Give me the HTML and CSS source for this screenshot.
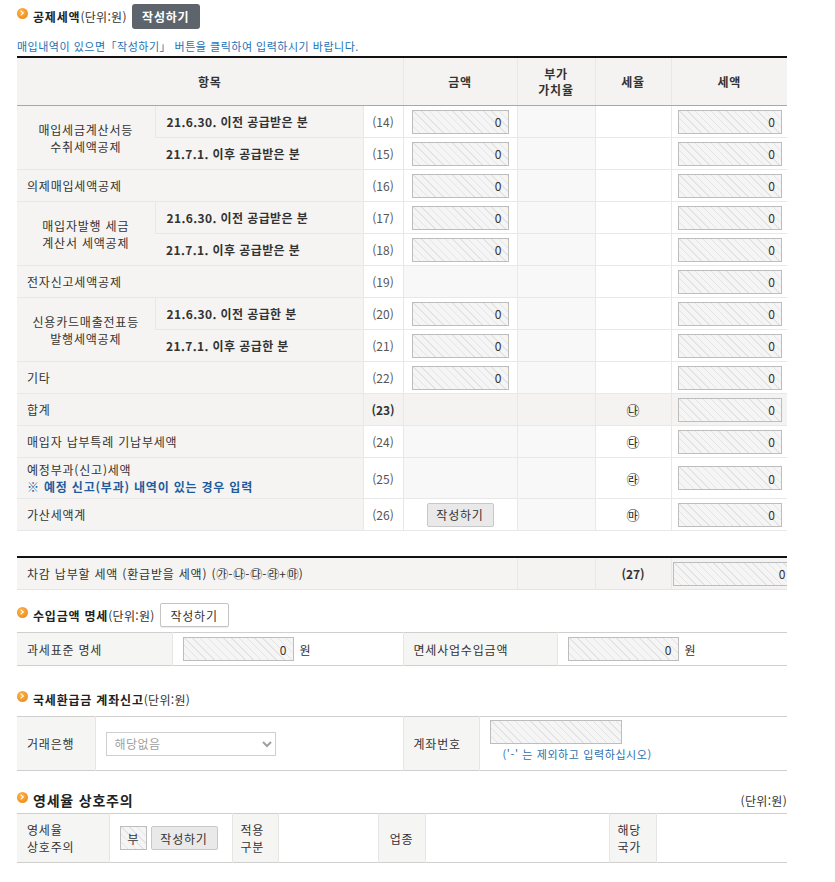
FILE: index.html
```html
<!DOCTYPE html>
<html lang="ko">
<head>
<meta charset="utf-8">
<title>공제세액</title>
<link rel="stylesheet" href="styles.css">
</head>
<body>
<div class="wrap">
  <div class="sec-head">
    <span class="bullet"></span>
    <span class="title">공제세액</span><span class="unit">(단위:원)</span>
    <button class="btn-dark">작성하기</button>
  </div>
  <p class="info">매입내역이 있으면「작성하기」 버튼을 클릭하여 입력하시기 바랍니다.</p>

  <table class="main">
    <colgroup>
      <col class="c1"><col class="c2"><col class="c3"><col class="c4"><col class="c5"><col class="c6"><col class="c7">
    </colgroup>
    <thead>
      <tr><th colspan="3">항목</th><th>금액</th><th>부가<br>가치율</th><th>세율</th><th>세액</th></tr>
    </thead>
    <tbody>
      <tr>
        <td class="lb grp" rowspan="2">매입세금계산서등<br>수취세액공제</td>
        <td class="lb sub">21.6.30. 이전 공급받은 분</td>
        <td class="no">(14)</td>
        <td class="amt"><input class="hatch amt-in" type="text" value="0" readonly></td>
        <td class="rate"></td><td class="pct"></td>
        <td class="tax"><input class="hatch tax-in" type="text" value="0" readonly></td>
      </tr>
      <tr>
        <td class="lb sub">21.7.1. 이후 공급받은 분</td>
        <td class="no">(15)</td>
        <td class="amt"><input class="hatch amt-in" type="text" value="0" readonly></td>
        <td class="rate"></td><td class="pct"></td>
        <td class="tax"><input class="hatch tax-in" type="text" value="0" readonly></td>
      </tr>
      <tr>
        <td class="lb one" colspan="2">의제매입세액공제</td>
        <td class="no">(16)</td>
        <td class="amt"><input class="hatch amt-in" type="text" value="0" readonly></td>
        <td class="rate"></td><td class="pct"></td>
        <td class="tax"><input class="hatch tax-in" type="text" value="0" readonly></td>
      </tr>
      <tr>
        <td class="lb grp" rowspan="2">매입자발행 세금<br>계산서 세액공제</td>
        <td class="lb sub">21.6.30. 이전 공급받은 분</td>
        <td class="no">(17)</td>
        <td class="amt"><input class="hatch amt-in" type="text" value="0" readonly></td>
        <td class="rate"></td><td class="pct"></td>
        <td class="tax"><input class="hatch tax-in" type="text" value="0" readonly></td>
      </tr>
      <tr>
        <td class="lb sub">21.7.1. 이후 공급받은 분</td>
        <td class="no">(18)</td>
        <td class="amt"><input class="hatch amt-in" type="text" value="0" readonly></td>
        <td class="rate"></td><td class="pct"></td>
        <td class="tax"><input class="hatch tax-in" type="text" value="0" readonly></td>
      </tr>
      <tr>
        <td class="lb one" colspan="2">전자신고세액공제</td>
        <td class="no">(19)</td>
        <td class="amt empty"></td>
        <td class="rate"></td><td class="pct"></td>
        <td class="tax"><input class="hatch tax-in" type="text" value="0" readonly></td>
      </tr>
      <tr>
        <td class="lb grp" rowspan="2">신용카드매출전표등<br>발행세액공제</td>
        <td class="lb sub">21.6.30. 이전 공급한 분</td>
        <td class="no">(20)</td>
        <td class="amt"><input class="hatch amt-in" type="text" value="0" readonly></td>
        <td class="rate"></td><td class="pct"></td>
        <td class="tax"><input class="hatch tax-in" type="text" value="0" readonly></td>
      </tr>
      <tr>
        <td class="lb sub">21.7.1. 이후 공급한 분</td>
        <td class="no">(21)</td>
        <td class="amt"><input class="hatch amt-in" type="text" value="0" readonly></td>
        <td class="rate"></td><td class="pct"></td>
        <td class="tax"><input class="hatch tax-in" type="text" value="0" readonly></td>
      </tr>
      <tr>
        <td class="lb one" colspan="2">기타</td>
        <td class="no">(22)</td>
        <td class="amt"><input class="hatch amt-in" type="text" value="0" readonly></td>
        <td class="rate"></td><td class="pct"></td>
        <td class="tax"><input class="hatch tax-in" type="text" value="0" readonly></td>
      </tr>
      <tr class="sum">
        <td class="lb one" colspan="2">합계</td>
        <td class="no bold">(23)</td>
        <td class="amt"></td>
        <td class="rate"></td><td class="pct circ">㉯</td>
        <td class="tax"><input class="hatch tax-in" type="text" value="0" readonly></td>
      </tr>
      <tr>
        <td class="lb one" colspan="2">매입자 납부특례 기납부세액</td>
        <td class="no">(24)</td>
        <td class="amt empty"></td>
        <td class="rate"></td><td class="pct circ">㉰</td>
        <td class="tax"><input class="hatch tax-in" type="text" value="0" readonly></td>
      </tr>
      <tr class="tall">
        <td class="lb one" colspan="2">예정부과(신고)세액<br><span class="note">※ 예정 신고(부과) 내역이 있는 경우 입력</span></td>
        <td class="no">(25)</td>
        <td class="amt empty"></td>
        <td class="rate"></td><td class="pct circ">㉱</td>
        <td class="tax"><input class="hatch tax-in" type="text" value="0" readonly></td>
      </tr>
      <tr>
        <td class="lb one" colspan="2">가산세액계</td>
        <td class="no">(26)</td>
        <td class="amt"><button class="btn-light">작성하기</button></td>
        <td class="rate"></td><td class="pct circ">㉲</td>
        <td class="tax"><input class="hatch tax-in" type="text" value="0" readonly></td>
      </tr>
    </tbody>
  </table>

  <table class="total">
    <colgroup>
      <col class="t1"><col class="t2"><col class="t3"><col class="t4">
    </colgroup>
    <tr>
      <td class="lb one">차감 납부할 세액 (환급받을 세액) (<span class="circ">㉮</span>-<span class="circ">㉯</span>-<span class="circ">㉰</span>-<span class="circ">㉱</span>+<span class="circ">㉲</span>)</td>
      <td></td>
      <td class="no bold">(27)</td>
      <td class="clip"><div class="clipbox"><input class="hatch total-in" type="text" value="0" readonly></div></td>
    </tr>
  </table>

  <div class="sec-head s2">
    <span class="bullet"></span>
    <span class="title">수입금액 명세</span><span class="unit">(단위:원)</span>
    <button class="btn-white">작성하기</button>
  </div>
  <table class="grid g3">
    <colgroup>
      <col class="a1"><col class="a2"><col class="a3"><col class="a4">
    </colgroup>
    <tr>
      <td class="gl">과세표준 명세</td>
      <td class="gv"><input class="hatch inc-in" type="text" value="0" readonly><span class="won">원</span></td>
      <td class="gl">면세사업수입금액</td>
      <td class="gv"><input class="hatch inc-in" type="text" value="0" readonly><span class="won">원</span></td>
    </tr>
  </table>

  <div class="sec-head s3">
    <span class="bullet"></span>
    <span class="title">국세환급금 계좌신고</span><span class="unit">(단위:원)</span>
  </div>
  <table class="grid g4">
    <colgroup>
      <col class="b1"><col class="b2"><col class="b3"><col class="b4">
    </colgroup>
    <tr>
      <td class="gl">거래은행</td>
      <td class="gv"><select class="bank"><option>해당없음</option></select></td>
      <td class="gl">계좌번호</td>
      <td class="gv acct">
        <input class="hatch acct-in" type="text" value="" readonly>
        <div class="hint">('-' 는 제외하고 입력하십시오)</div>
      </td>
    </tr>
  </table>

  <div class="sec-head s4">
    <span class="bullet"></span>
    <span class="title big">영세율 상호주의</span>
    <span class="unit right">(단위:원)</span>
  </div>
  <table class="grid g5">
    <colgroup>
      <col class="d1"><col class="d2"><col class="d3"><col class="d4"><col class="d5"><col class="d6"><col class="d7"><col class="d8">
    </colgroup>
    <tr>
      <td class="gl">영세율<br>상호주의</td>
      <td class="gv"><div class="pair"><input class="hatch yn" type="text" value="부" readonly><button class="btn-light">작성하기</button></div></td>
      <td class="gl sm">적용<br>구분</td>
      <td class="gv"></td>
      <td class="gl sm ctr">업종</td>
      <td class="gv"></td>
      <td class="gl sm">해당<br>국가</td>
      <td class="gv"></td>
    </tr>
  </table>
</div>
</body>
</html>
```

FILE: styles.css
```css
html, body {
  margin: 0;
  padding: 0;
  background: #fff;
}
body {
  font-family: "Noto Sans CJK KR", "Noto Sans", sans-serif;
  font-size: 12px;
  color: #333;
  letter-spacing: 0.8px;
}
.wrap {
  width: 770px;
  padding: 4px 0 20px 17px;
}
.sec-head {
  display: flex;
  align-items: center;
  height: 24px;
}
.bullet {
  width: 11px;
  height: 11px;
  border-radius: 50%;
  background: radial-gradient(circle at 40% 35%, #fbb64a, #ea8214);
  position: relative;
  margin: -5px 5px 0 0;
  flex: none;
}
.bullet::after {
  content: "";
  position: absolute;
  left: 2px;
  top: 3px;
  width: 3px;
  height: 3px;
  border-top: 1.5px solid #fff;
  border-right: 1.5px solid #fff;
  transform: rotate(45deg);
}
.title {
  font-weight: 700;
  font-size: 12px;
  color: #222;
}
.title.big {
  font-size: 14px;
}
.unit {
  font-size: 12px;
  letter-spacing: 0.3px;
  color: #333;
  margin-right: 5px;
}
.unit.right {
  margin-left: auto;
  margin-right: 0;
}
.btn-dark {
  font-family: inherit;
  font-size: 12px;
  font-weight: 700;
  letter-spacing: 0.8px;
  color: #fff;
  background: #5e646c;
  border: 0;
  border-radius: 3px;
  height: 25px;
  width: 68px;
  padding: 0;
}
.btn-white {
  font-family: inherit;
  font-size: 12px;
  letter-spacing: 0.8px;
  color: #333;
  background: #fff;
  border: 1px solid #c4c4c4;
  border-radius: 2px;
  height: 24px;
  width: 69px;
  padding: 0;
  box-shadow: 0 1px 1px rgba(0,0,0,0.08);
}
.btn-light {
  font-family: inherit;
  font-size: 12px;
  letter-spacing: 0.8px;
  color: #333;
  background: #e9e9e9;
  border: 1px solid #c8c8c8;
  border-radius: 2px;
  height: 24px;
  width: 67px;
  padding: 0;
}
.info {
  margin: 10px 0 0;
  height: 16px;
  line-height: 16px;
  font-size: 11px;
  letter-spacing: 0.5px;
  color: #2272b6;
}

/* main table */
table {
  border-collapse: collapse;
  table-layout: fixed;
  width: 770px;
}
td, th {
  padding: 0;
}
.main {
  margin-top: 2px;
  border-top: 2px solid #111;
}
.c1 { width: 138px; }
.c2 { width: 208px; }
.c3 { width: 40px; }
.c4 { width: 114px; }
.c5 { width: 78px; }
.c6 { width: 76px; }
.c7 { width: 116px; }
.main th {
  height: 47px;
  background: #f4f3f1;
  font-weight: 700;
  color: #333;
  line-height: 16px;
  border-left: 1px solid #e8e8e8;
  border-bottom: 1px solid #a8a8a8;
}
.main th:first-child {
  border-left: 0;
}
.main td {
  height: 31px;
  border: 1px solid #e8e8e8;
  border-right: 0;
  background: #fff;
}
.main td:first-child {
  border-left: 0;
}
.main tr.tall td {
  height: 40px;
}
.lb {
  background: #f5f4f2 !important;
  color: #333;
}
.grp {
  text-align: center;
  line-height: 17px;
}
.sub {
  font-weight: 700;
  letter-spacing: 0.4px;
  padding-left: 11px !important;
}
.one {
  padding-left: 10px !important;
  line-height: 17px;
}
.note {
  color: #1d5c9e;
  font-weight: 700;
}
.no {
  text-align: center;
  color: #555;
  letter-spacing: 0;
}
.bold {
  font-weight: 700;
  color: #333;
}
.amt {
  text-align: center;
}
.amt.empty {
  background: #f8f8f8 !important;
}
.rate {
  background: #f8f8f8 !important;
}
.pct {
  text-align: center;
}
.circ {
  font-size: 13px;
  letter-spacing: 0;
  color: #333;
}
.tax {
  text-align: right;
  padding-right: 5px !important;
}
.sum td {
  background: #f4f3f1 !important;
}
.hatch {
  font-family: inherit;
  font-size: 12px;
  letter-spacing: 0;
  color: #333;
  text-align: right;
  border: 1px solid #bdbdbd;
  background-color: #f5f5f5;
  background-image: repeating-linear-gradient(45deg, #f5f5f5 0, #f5f5f5 4.5px, #e4e4e4 4.5px, #e4e4e4 5.5px);
  box-sizing: border-box;
  height: 24px;
  padding: 0 6px;
  margin: 0;
  vertical-align: middle;
  outline: none;
}
.amt-in { width: 97px; }
.tax-in { width: 104px; }

/* total row */
.total {
  margin-top: 25px;
  border-top: 2px solid #111;
}
.t1 { width: 500px; }
.t2 { width: 78px; }
.t3 { width: 76px; }
.t4 { width: 116px; }
.total td {
  height: 31px;
  background: #f4f3f1;
  border-bottom: 1px solid #e4e4e4;
  border-left: 1px solid #e8e8e8;
}
.total td:first-child {
  border-left: 0;
  color: #333;
}
.total .circ {
  font-size: 12px;
}
.clipbox {
  overflow: hidden;
  padding-left: 1px;
}
.total-in {
  width: 120px;
  display: block;
}

/* secondary grids */
.s2 { margin-top: 13px; }
.s3 { margin-top: 21px; }
.s4 { margin-top: 17px; }
.grid {
  border-top: 1px solid #cfcfcf;
  border-bottom: 1px solid #cfcfcf;
}
.g3 { margin-top: 5px; }
.g4 { margin-top: 5px; }
.g5 { margin-top: 1px; }
.grid td {
  border-left: 1px solid #e6e6e6;
}
.grid td:first-child {
  border-left: 0;
}
.gl {
  background: #f5f5f4;
  padding-left: 10px !important;
  color: #333;
  line-height: 17px;
}
.gl.sm {
  padding-left: 8px !important;
}
.gl.ctr {
  text-align: center;
  padding-left: 0 !important;
}
.gv {
  background: #fff;
  padding-left: 10px !important;
}
.g3 td { height: 32px; }
.a1 { width: 155px; }
.a2 { width: 231px; }
.a3 { width: 154px; }
.a4 { width: 230px; }
.inc-in { width: 111px; }
.won {
  margin-left: 6px;
  vertical-align: middle;
}
.g4 td { height: 50px; }
.b1 { width: 78px; }
.b2 { width: 308px; }
.b3 { width: 76px; }
.b4 { width: 308px; }
.bank {
  font-family: inherit;
  font-size: 12px;
  letter-spacing: 0.5px;
  color: #a0a0a0;
  width: 170px;
  height: 24px;
  border: 1px solid #cfcfcf;
  background: #fff;
  border-radius: 0;
  padding: 0 4px;
}
.acct {
  vertical-align: top;
  padding-top: 3px !important;
}
.acct-in { width: 132px; display: block; }
.hint {
  color: #2f6fae;
  font-size: 11px;
  letter-spacing: 0.6px;
  line-height: 14px;
  margin: 3px 0 0 13px;
}
.g5 td { height: 48px; }
.d1 { width: 92px; }
.d2 { width: 123px; }
.d3 { width: 46px; }
.d4 { width: 100px; }
.d5 { width: 47px; }
.d6 { width: 184px; }
.d7 { width: 47px; }
.d8 { width: 131px; }
.pair {
  display: flex;
  align-items: center;
  gap: 4px;
}
.yn {
  width: 27px;
  text-align: center;
  padding: 0;
}
```
